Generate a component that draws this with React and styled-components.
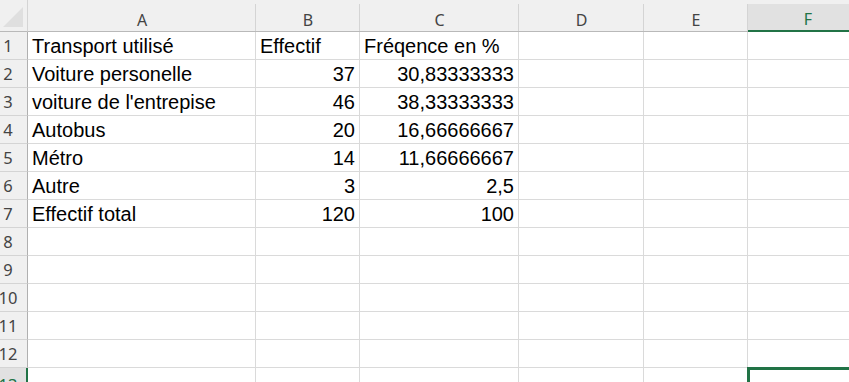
import styled, { createGlobalStyle } from "styled-components"

const GlobalStyle = createGlobalStyle`
    html, body {
        margin: 0;
        padding: 0;
        background: #ffffff;
        overflow: hidden;
    }
`

const colonnes = ["A", "B", "C", "D", "E", "F"]

const lignes = [
    ["Transport utilisé", "Effectif", "Fréqence en %"],
    ["Voiture personelle", 37, "30,83333333"],
    ["voiture de l'entrepise", 46, "38,33333333"],
    ["Autobus", 20, "16,66666667"],
    ["Métro", 14, "11,66666667"],
    ["Autre", 3, "2,5"],
    ["Effectif total", 120, "100"],
]

const Feuille = styled.div`
    display: grid;
    grid-template-columns: 28px 228px 104px 159px 125px 104px 120px;
    grid-template-rows: 32px repeat(13, 28px);
    width: 849px;
    height: 382px;
    overflow: hidden;
    font-family: "Liberation Sans", Arial, sans-serif;
`

const Coin = styled.div`
    position: relative;
    background: #f0f0f0;
    border-right: 1px solid #d4d4d4;
    border-bottom: 1px solid #b9b9b9;

    &::after {
        content: "";
        position: absolute;
        right: 4px;
        bottom: 4px;
        width: 0;
        height: 0;
        border-left: 20px solid transparent;
        border-bottom: 20px solid #dfdfdf;
    }
`

const EnteteColonne = styled.div`
    display: flex;
    align-items: center;
    justify-content: center;
    padding-top: 8px;
    box-sizing: border-box;
    background: ${p => (p.$actif ? "linear-gradient(#f0f0f0 0 4px, #e1e1e1 4px)" : "#f0f0f0")};
    border-bottom: ${p => (p.$actif ? "2px solid #217346" : "1px solid #b9b9b9")};
    position: relative;
    font-family: "Noto Sans", "Open Sans", sans-serif;
    font-size: 16px;
    color: ${p => (p.$actif ? "#217346" : "#444444")};

    &::after {
        content: "";
        position: absolute;
        right: 0;
        top: 4px;
        bottom: 0;
        width: 1px;
        background: #d4d4d4;
    }
`

const EnteteLigne = styled.div`
    position: relative;
    overflow: hidden;
    background: ${p => (p.$actif ? "#e1e1e1" : "#f0f0f0")};
    border-right: ${p => (p.$actif ? "2px solid #217346" : "1px solid #b0b0b0")};
    border-bottom: 1px solid #d4d4d4;
    box-sizing: border-box;
`

const Numero = styled.span`
    position: absolute;
    right: ${p => (p.$actif ? "-2px" : "-1px")};
    width: 40px;
    top: ${p => (p.$actif ? "6px" : "3px")};
    text-align: center;
    font-family: "Noto Sans", "Open Sans", sans-serif;
    font-size: 16.5px;
    line-height: 22px;
    color: ${p => (p.$actif ? "#217346" : "#444444")};
`

const Cellule = styled.div`
    display: flex;
    align-items: flex-end;
    justify-content: ${p => (p.$droite ? "flex-end" : "flex-start")};
    padding: 0 4px 1px 4px;
    box-sizing: border-box;
    border-right: 1px solid #dadada;
    border-bottom: 1px solid #dadada;
    font-size: 20px;
    line-height: 23px;
    color: #000000;
    white-space: nowrap;
    overflow: visible;
    position: relative;
`

const Selection = styled.div`
    position: absolute;
    left: -1px;
    top: -1px;
    right: -4px;
    bottom: -4px;
    border: 3px solid #217346;
`

function Tableur() {
    const totalLignes = 13

    return <Feuille>
        <Coin />
        {colonnes.map(c => (
            <EnteteColonne key={c} $actif={c === "F"}>{c}</EnteteColonne>
        ))}

        {Array.from({ length: totalLignes }, (_, i) => {
            const donnees = lignes[i] || []
            const numero = i + 1
            const derniere = numero === 13
            return [
                <EnteteLigne key={"n" + numero} $actif={derniere}>
                    <Numero $actif={derniere}>{numero}</Numero>
                </EnteteLigne>,
                ...colonnes.map((c, j) => {
                    const valeur = donnees[j]
                    const droite = i > 0 && (j === 1 || j === 2)
                    return <Cellule key={c + numero} $droite={droite}>
                        {valeur}
                        {derniere && c === "F" && <Selection />}
                    </Cellule>
                }),
            ]
        })}
    </Feuille>
}

export default function App() {
    return <>
        <GlobalStyle />
        <Tableur />
    </>
}
